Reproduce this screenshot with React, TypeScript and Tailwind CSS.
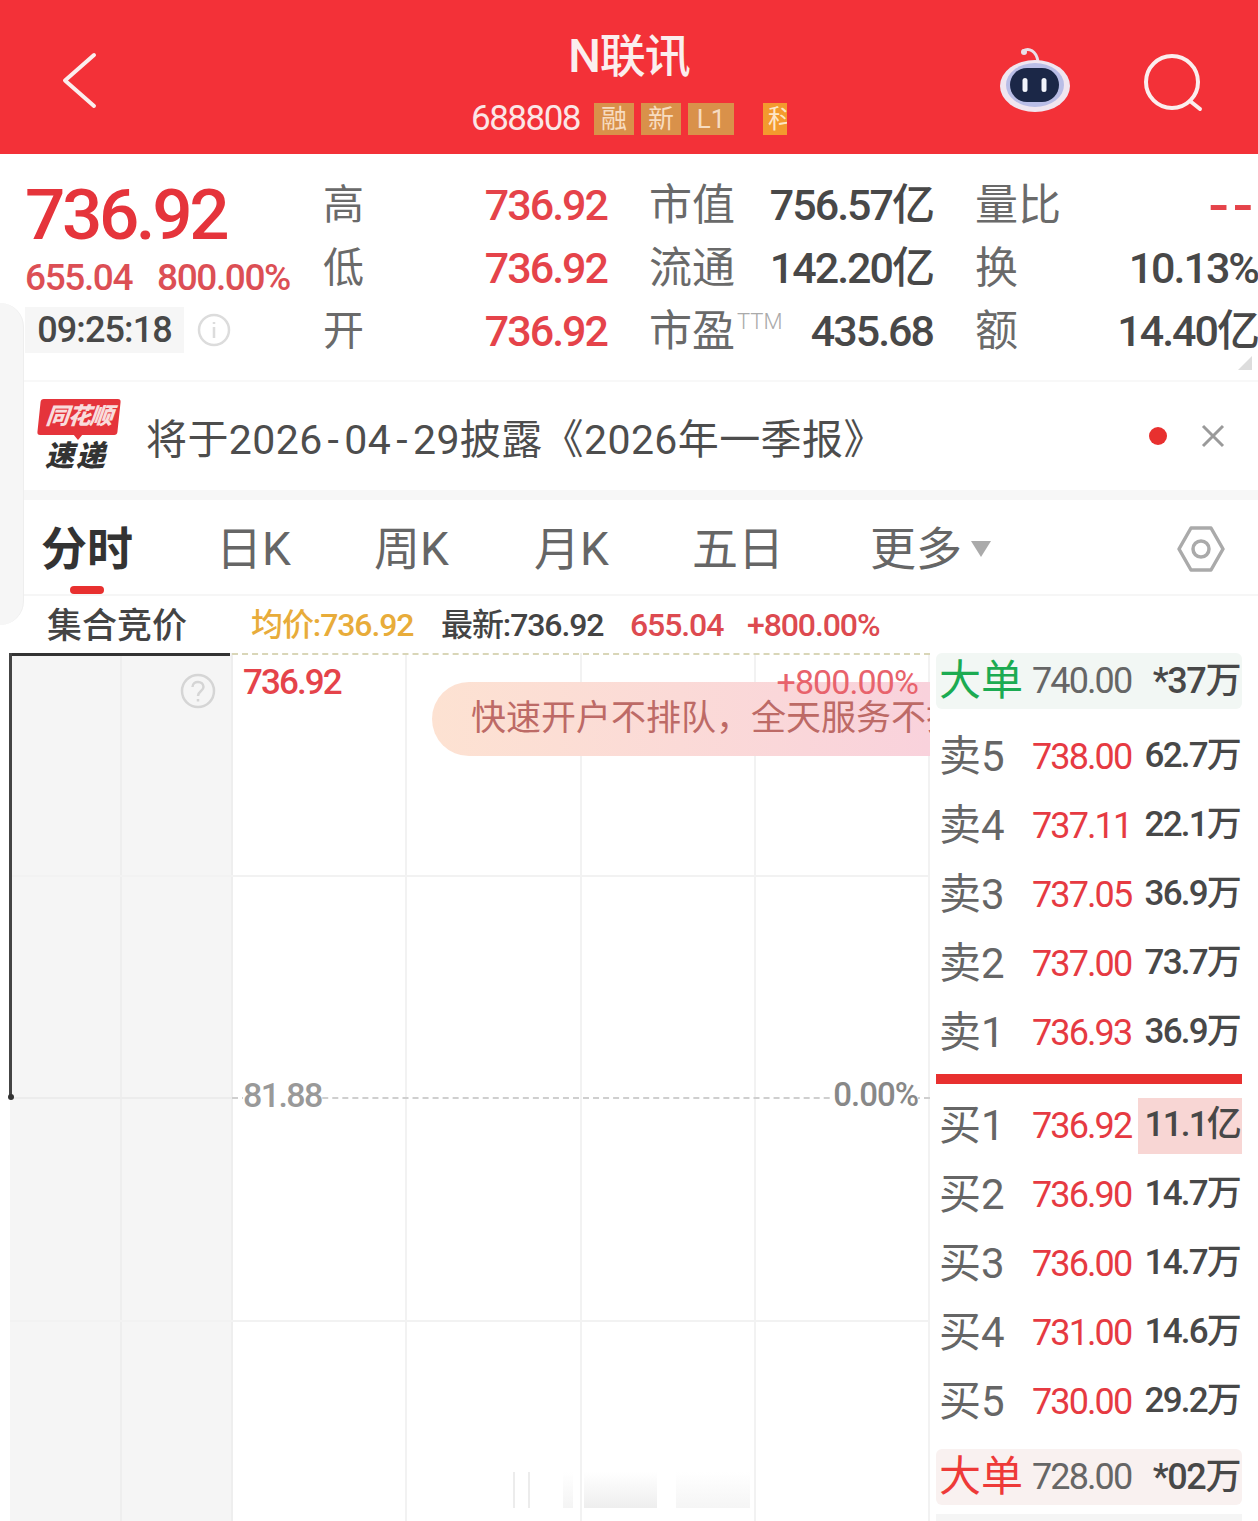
import React from 'react';

const asks = [
  { name: '卖5', price: '738.00', qty: '62.7万' },
  { name: '卖4', price: '737.11', qty: '22.1万' },
  { name: '卖3', price: '737.05', qty: '36.9万' },
  { name: '卖2', price: '737.00', qty: '73.7万' },
  { name: '卖1', price: '736.93', qty: '36.9万' },
];

const bids = [
  { name: '买1', price: '736.92', qty: '11.1亿', hot: true },
  { name: '买2', price: '736.90', qty: '14.7万' },
  { name: '买3', price: '736.00', qty: '14.7万' },
  { name: '买4', price: '731.00', qty: '14.6万' },
  { name: '买5', price: '730.00', qty: '29.2万' },
];

const stats = [
  [
    { label: '高', value: '736.92', red: true },
    { label: '市值', value: '756.57亿' },
    { label: '量比', value: '--', red: true, dash: true },
  ],
  [
    { label: '低', value: '736.92', red: true },
    { label: '流通', value: '142.20亿' },
    { label: '换', value: '10.13%' },
  ],
  [
    { label: '开', value: '736.92', red: true },
    { label: '市盈', sup: 'TTM', value: '435.68' },
    { label: '额', value: '14.40亿' },
  ],
];

const BookRow = ({ name, price, qty, hot }: { name: string; price: string; qty: string; hot?: boolean }) => (
  <div className="flex h-[69px] items-center pl-[3px]">
    <span className="w-[93px] text-[42px] text-[#666]">{name}</span>
    <span className="w-[106px] text-[36px] tracking-[-1.9px] text-[#e63a42]">{price}</span>
    <span
      className={`flex h-[56px] flex-1 items-center justify-end pr-0.5 text-[35px] font-medium tracking-[-1.8px] text-[#484848] ${
        hot ? 'bg-[#f8d6d4]' : ''
      }`}
    >
      {qty}
    </span>
  </div>
);

const BigOrder = ({ color, bg, price, qty }: { color: string; bg: string; price: string; qty: string }) => (
  <div className={`flex h-[56px] items-center rounded-md pl-[3px] ${bg}`}>
    <span className={`w-[93px] text-[42px] leading-none ${color}`}>大单</span>
    <span className="w-[112px] text-[36px] tracking-[-1.9px] text-[#666]">{price}</span>
    <span className="flex-1 pr-0.5 text-right text-[36px] font-medium tracking-[-1.4px] text-[#484848]">{qty}</span>
  </div>
);

const Tag = ({ children, w }: { children: React.ReactNode; w: string }) => (
  <span className={`flex h-[32px] items-center justify-center overflow-hidden bg-[#d9914a] text-[26px] leading-none text-[#f7dcc0] ${w}`}>
    {children}
  </span>
);

export default function App() {
  return (
    <div className="relative h-[1521px] w-[1258px] overflow-hidden bg-white font-['Roboto','Noto_Sans_CJK_SC',sans-serif]">
      {/* Top bar */}
      <header className="relative flex h-[154px] flex-col items-center bg-[#f33138] pt-[28px] text-white">
        <div className="text-[46px] font-medium leading-[56px] tracking-[-1px] text-[#fbeeee]">N联讯</div>
        <div className="mt-[15px] flex h-[40px] items-center text-[35px] tracking-[-1.5px] text-[#fbe6e6]">
          <span className="mr-[14px]">688808</span>
          <div className="flex gap-[7px] tracking-normal">
            <Tag w="w-[40px]">融</Tag>
            <Tag w="w-[40px]">新</Tag>
            <Tag w="w-[46px]">L1</Tag>
          </div>
          <span className="ml-[29px] flex h-[32px] w-[24px] items-center justify-start overflow-hidden bg-[#f39a2e] text-[26px] leading-none text-[#fde6c8]">
            <span className="ml-[5px] shrink-0">科</span>
          </span>
        </div>
        <svg className="absolute left-[60px] top-[50px]" width="40" height="60" viewBox="0 0 40 60" fill="none">
          <path d="M34 5 L5 30.5 L34 56" stroke="#fbeeee" strokeWidth="4" strokeLinecap="round" strokeLinejoin="round" />
        </svg>
        <svg className="absolute left-[998px] top-[46px]" width="74" height="68" viewBox="0 0 74 68" fill="none">
          <path d="M25 5 C31 1 38 5 40 15" stroke="#eadfe8" strokeWidth="3" />
          <circle cx="26" cy="6" r="3" fill="#eadfe8" />
          <ellipse cx="37" cy="40" rx="35" ry="26" fill="#f0e6f0" />
          <ellipse cx="37" cy="39" rx="29" ry="22" fill="#b9bde6" />
          <rect x="12" y="22" width="49" height="34" rx="17" fill="#1b2747" />
          <rect x="24.5" y="32" width="5" height="14" rx="2.5" fill="#f2f4fb" />
          <rect x="43.5" y="32" width="5" height="14" rx="2.5" fill="#f2f4fb" />
        </svg>
        <svg className="absolute left-[1140px] top-[50px]" width="66" height="66" viewBox="0 0 66 66" fill="none">
          <circle cx="32" cy="32" r="26" stroke="#fbeeee" strokeWidth="4" />
          <path d="M50 51 L60 59" stroke="#fbeeee" strokeWidth="4" strokeLinecap="round" />
        </svg>
      </header>

      {/* Quote summary */}
      <section className="flex h-[228px] border-b-2 border-[#f8f8f8]">
        <div className="w-[323px] pl-[25px]">
          <div className="mt-[26px] h-[70px] text-[71px] font-medium leading-[70px] tracking-[-3.4px] text-[#e5343b]">736.92</div>
          <div className="mt-[8px] flex h-[40px] items-center text-[37px] font-medium tracking-[-1.4px] text-[#dc4f55]">
            <span className="w-[132px]">655.04</span>
            <span>800.00%</span>
          </div>
          <div className="mt-[9px] flex items-center">
            <span className="flex h-[46px] w-[159px] items-center justify-center bg-[#f6f6f6] text-[36px] font-medium tracking-[-0.9px] text-[#484848]">09:25:18</span>
            <svg className="ml-[13px]" width="34" height="34" viewBox="0 0 34 34" fill="none">
              <circle cx="17" cy="17" r="15" stroke="#dcdcdc" strokeWidth="2.5" />
              <path d="M17 14 V25 M17 9 V11" stroke="#dcdcdc" strokeWidth="2.5" />
            </svg>
          </div>
        </div>
        <div className="mt-[20px] grid h-[189px] w-[935px] grid-cols-[284px_326px_325px] grid-rows-3">
          {stats.flatMap((row) =>
            row.map((item, i) => (
              <div key={item.label} className={`flex items-center justify-between ${i > 0 ? 'pl-[42px]' : ''}`}>
                <span className={`flex items-start leading-none text-[#6a6a6a] ${i > 0 ? 'text-[43px]' : 'text-[41px]'}`}>
                  {item.label}
                  {item.sup && <span className="ml-[2px] text-[22px] font-light leading-[24px] text-[#aaa]">{item.sup}</span>}
                </span>
                {item.dash ? (
                  <span className="whitespace-nowrap text-[66px] leading-none tracking-[6px] text-[#e5434a]">{item.value}</span>
                ) : (
                  <span
                    className={`whitespace-nowrap text-[43px] font-medium tracking-[-2px] ${
                      item.red ? 'text-[#e5434a]' : 'text-[#484848]'
                    }`}
                  >
                    {item.value}
                  </span>
                )}
              </div>
            )),
          )}
        </div>
      </section>

      {/* Report notice */}
      <section className="flex h-[108px] items-center pl-[37px] pr-[32px]">
        <div className="relative h-[74px] w-[84px] shrink-0">
          <div className="ml-[2px] h-[36px] w-[80px] -skew-x-6 rounded-[3px] bg-[#e5343b] text-center text-[23px] font-black italic leading-[36px] tracking-[-1px] text-[#f9dcdc]">
            同花顺
          </div>
          <span className="absolute left-[36px] top-[35px] h-0 w-0 border-x-[5px] border-t-[6px] border-x-transparent border-t-[#e5343b]" />
          <div className="mt-[4px] pl-[8px] text-[29px] font-black italic leading-[34px] tracking-[2px] text-[#333]">速递</div>
        </div>
        <div className="ml-[25px] mt-[10px] flex-1 whitespace-nowrap text-[41px] tracking-[0.4px] text-[#4d4d4d]">
          将于2026<span className="mx-[5px]">-</span>04<span className="mx-[5px]">-</span>29披露《2026年一季报》
        </div>
        <span className="h-[18px] w-[18px] rounded-full bg-[#e8302f]" />
        <svg className="ml-[33px]" width="26" height="26" viewBox="0 0 26 26" fill="none">
          <path d="M3 3 L23 23 M23 3 L3 23" stroke="#9a9a9a" strokeWidth="3" />
        </svg>
      </section>
      <div className="h-[10px] bg-[#f7f7f7]" />

      {/* Period tabs */}
      <nav className="relative flex h-[96px] items-center border-b-2 border-[#f6f6f6] pl-[41px] pt-[3px] text-[46px] leading-none text-[#666]">
        <span className="w-[175px] text-[46px] font-bold text-[#333]">分时</span>
        <span className="w-[158px]">日K</span>
        <span className="w-[160px]">周K</span>
        <span className="w-[158px]">月K</span>
        <span className="w-[178px]">五日</span>
        <span>更多</span>
        <span className="ml-[9px] h-0 w-0 border-x-[10px] border-t-[16px] border-x-transparent border-t-[#aaa]" />
        <svg className="ml-auto mr-[33px]" width="48" height="48" viewBox="0 0 48 48" fill="none">
          <path d="M14 3 H34 L46 24 L34 45 H14 L2 24 Z" stroke="#aaa" strokeWidth="3.5" strokeLinejoin="round" />
          <circle cx="24" cy="24" r="8" stroke="#aaa" strokeWidth="3.5" />
        </svg>
        <span className="absolute bottom-0 left-[70px] h-[8px] w-[34px] rounded-full bg-[#e8302f]" />
      </nav>

      {/* Auction header */}
      <div className="flex h-[57px] items-center whitespace-nowrap pl-[47px] text-[32px] font-medium tracking-[-1.1px]">
        <span className="w-[204px] pt-[5px] text-[35px] tracking-normal text-[#444]">集合竞价</span>
        <span className="w-[190px] text-[#e8ac3a]">均价:736.92</span>
        <span className="w-[189px] text-[#444]">最新:736.92</span>
        <span className="w-[117px] text-[#dd4a50]">655.04</span>
        <span className="text-[#dd4a50]">+800.00%</span>
      </div>

      <main className="flex">
        {/* Time-share chart */}
        <div className="relative h-[869px] w-[930px] shrink-0">
          <div className="flex h-full pl-[10px]">
            <div className="w-[112px] border-r-2 border-[#eeeeee] bg-[#f5f5f5]" />
            <div className="w-[111px] border-r-2 border-[#eeeeee] bg-[#f5f5f5]" />
            <div className="w-[174px] border-r-2 border-[#f2f2f2]" />
            <div className="w-[175px] border-r-2 border-[#f2f2f2]" />
            <div className="w-[174px] border-r-2 border-[#f2f2f2]" />
            <div className="w-[174px] border-r-2 border-[#f2f2f2]" />
          </div>
          <div className="absolute left-[232px] right-0 top-0 border-t-2 border-dashed border-[#d9d6b8]" />
          <div className="absolute left-[232px] right-0 top-[444px] border-t-2 border-dashed border-[#cfcfcf]" />
          <div className="absolute left-[10px] top-[444px] w-[222px] border-t-2 border-[#ececec]" />
          <div className="absolute left-[10px] right-0 top-[222px] border-t-2 border-[#f2f2f2]" />
          <div className="absolute left-[10px] right-0 top-[667px] border-t-2 border-[#f2f2f2]" />
          <div className="absolute left-[10px] top-0 h-[3px] w-[220px] bg-[#333]" />
          <div className="absolute left-[9px] top-0 h-[445px] w-[3px] bg-[#444]" />
          <div className="absolute left-[8px] top-[441px] h-[6px] w-[6px] rounded-full bg-[#333]" />

          <svg className="absolute left-[180px] top-[20px]" width="36" height="36" viewBox="0 0 36 36" fill="none">
            <circle cx="18" cy="18" r="16" stroke="#d5d5d5" strokeWidth="2.5" />
            <path d="M12.5 14 C12.5 7 23.5 7.5 23.5 14 C23.5 18 18 18 18 23 M18 26 V28.5" stroke="#d5d5d5" strokeWidth="2.5" />
          </svg>
          <span className="absolute left-[243px] top-[4px] text-[35px] font-medium tracking-[-1.9px] text-[#e5434a]">736.92</span>
          <div className="absolute left-[432px] right-0 top-[29px] flex h-[74px] items-center overflow-hidden whitespace-nowrap rounded-l-[37px] bg-gradient-to-r from-[#fde2d2] to-[#f9d2dc] pl-[39px] text-[35px] text-[#bd6a66]">
            快速开户不排队，全天服务不打烊
          </div>
          <span className="absolute right-[12px] top-[4px] text-[34px] tracking-[-0.9px] text-[#e8636c]">+800.00%</span>
          <span className="absolute left-[243px] top-[417px] bg-white text-[34px] font-medium tracking-[-1.6px] text-[#999]">81.88</span>
          <span className="absolute right-[12px] top-[417px] bg-white text-[33px] font-medium tracking-[-1px] text-[#888]">0.00%</span>
        </div>

        {/* Order book */}
        <aside className="ml-[6px] w-[306px]">
          <BigOrder color="text-[#1cab52]" bg="bg-[#f2f7f4]" price="740.00" qty="*37万" />
          <div className="mt-[13px]">
            {asks.map((row) => (
              <BookRow key={row.name} {...row} />
            ))}
          </div>
          <div className="my-[7px] h-[10px] bg-[#e8302f]" />
          {bids.map((row) => (
            <BookRow key={row.name} {...row} />
          ))}
          <div className="mt-[13px]">
            <BigOrder color="text-[#ee3a38]" bg="bg-[#f9f1f0]" price="728.00" qty="*02万" />
          </div>
          <div className="mt-[9px] h-[10px] bg-[#f5f5f5]" />
        </aside>
      </main>

      {/* Floating edge handle and watermark remnants */}
      <div className="absolute left-0 top-[303px] h-[322px] w-[24px] rounded-r-[26px] border-r border-[#eeeeee] bg-[#f6f6f6]" />
      <div className="absolute left-[1238px] top-[356px] h-0 w-0 border-b-[14px] border-l-[14px] border-b-[#dddddd] border-l-transparent" />
      <div className="absolute left-[513px] top-[1472px] flex h-[36px]">
        <span className="w-[17px] border-x-2 border-[#ececec] bg-white" />
        <span className="ml-[33px] w-[10px] bg-gradient-to-t from-[#f4f4f4] to-white" />
        <span className="ml-[11px] w-[73px] bg-gradient-to-t from-[#eeeeee] to-white" />
        <span className="ml-[19px] w-[74px] bg-gradient-to-t from-[#f5f5f5] to-white" />
      </div>
    </div>
  );
}
